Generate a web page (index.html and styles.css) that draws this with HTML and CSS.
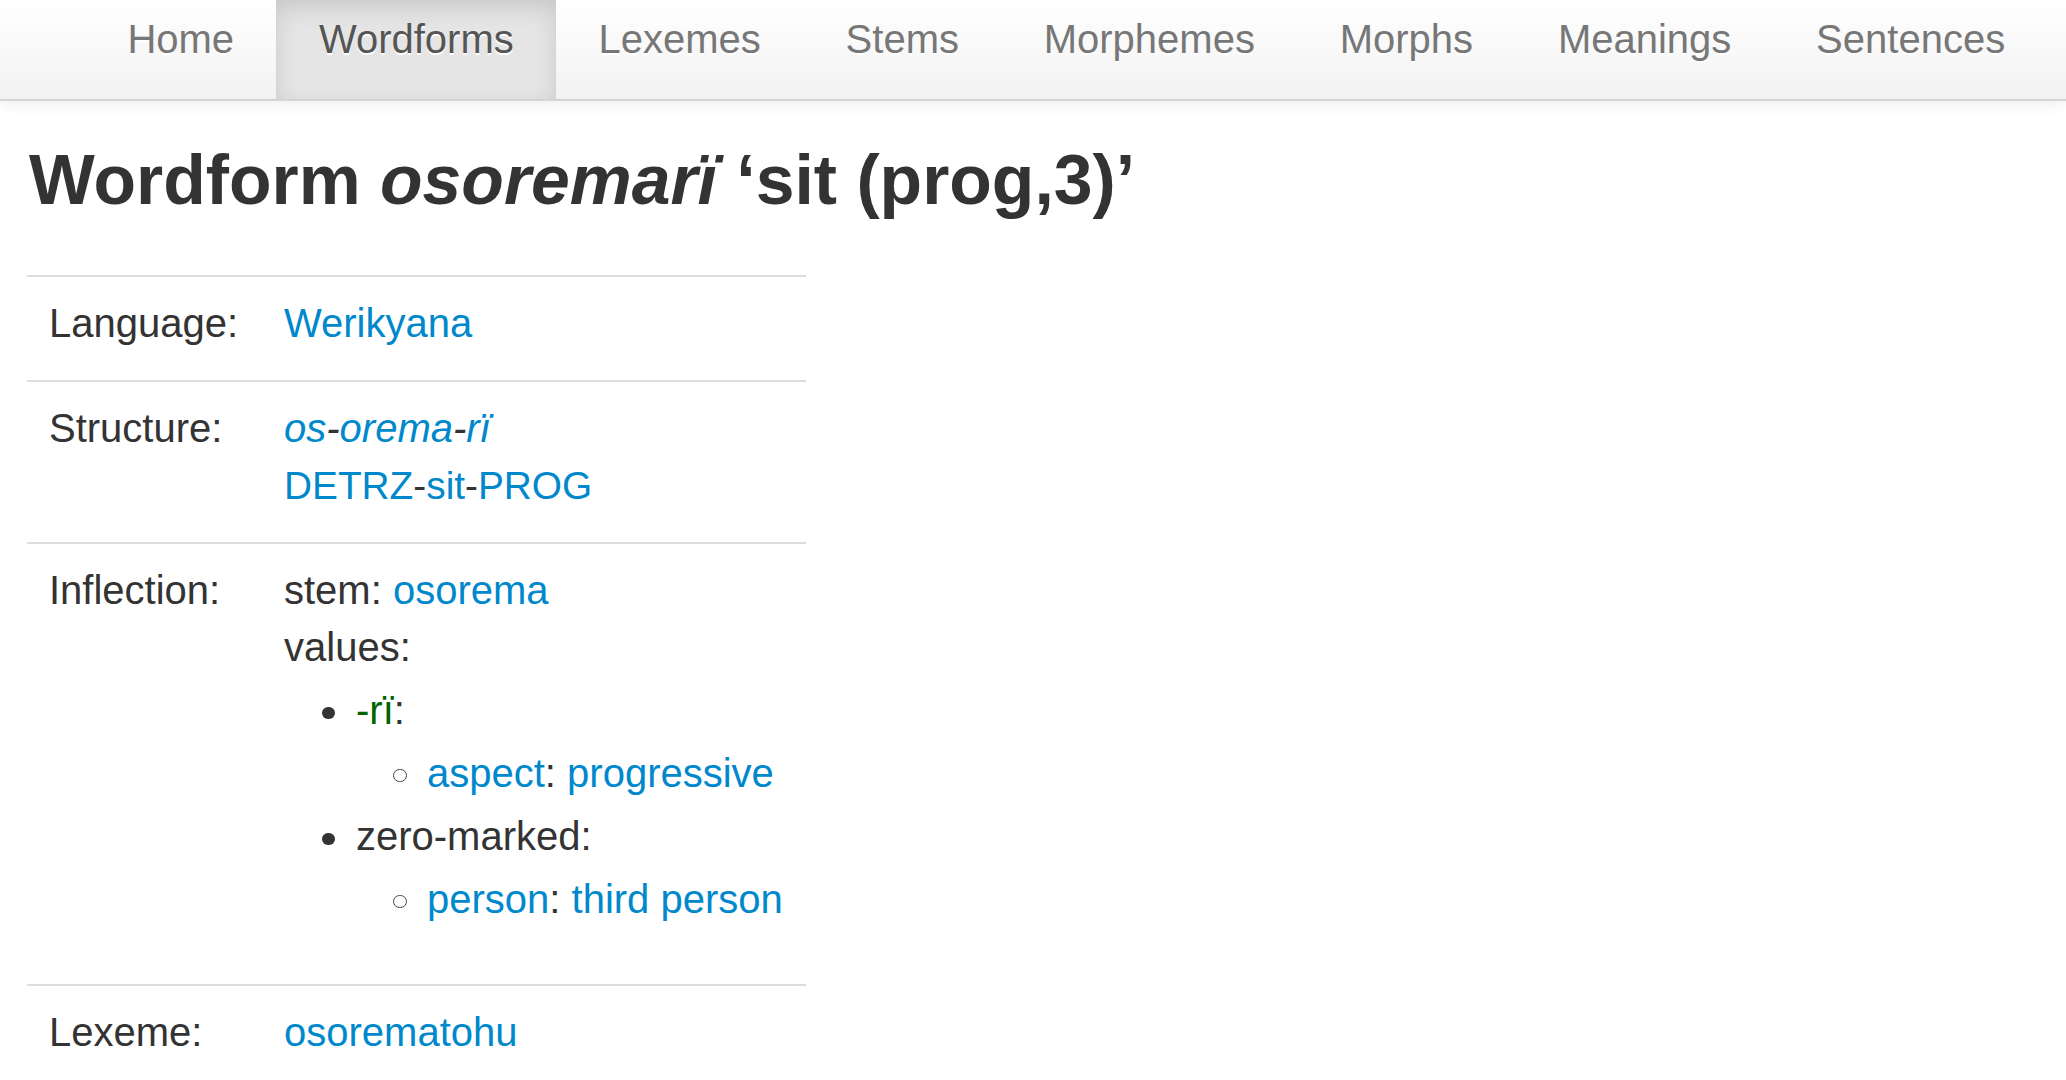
FILE: index.html
```html
<!DOCTYPE html>
<html lang="en">
<head>
<meta charset="utf-8">
<title>Wordform osoremarï</title>
<link rel="stylesheet" href="styles.css">
</head>
<body>
<header class="navbar">
  <ul class="nav">
    <li><a href="#">Home</a></li>
    <li class="active"><a href="#">Wordforms</a></li>
    <li><a href="#">Lexemes</a></li>
    <li><a href="#">Stems</a></li>
    <li><a href="#">Morphemes</a></li>
    <li><a href="#">Morphs</a></li>
    <li><a href="#">Meanings</a></li>
    <li><a href="#">Sentences</a></li>
  </ul>
</header>
<main class="page">
  <h1 class="title">Wordform <i>osoremarï</i> ‘sit (prog,3)’</h1>
  <table class="props">
    <colgroup><col class="col-label"><col class="col-value"></colgroup>
    <tbody>
      <tr>
        <th>Language:</th>
        <td><a href="#">Werikyana</a></td>
      </tr>
      <tr>
        <th>Structure:</th>
        <td>
          <div><i><a href="#">os</a>-<a href="#">orema</a>-<a href="#">rï</a></i></div>
          <div class="gloss"><a href="#">DETRZ</a>-<a href="#">sit</a>-<a href="#">PROG</a></div>
        </td>
      </tr>
      <tr>
        <th>Inflection:</th>
        <td>
          <div>stem: <a href="#">osorema</a></div>
          <div>values:</div>
          <ul class="values">
            <li><span class="morph">-rï</span>:
              <ul class="feats">
                <li><a href="#">aspect</a>: <a href="#">progressive</a></li>
              </ul>
            </li>
            <li>zero-marked:
              <ul class="feats">
                <li><a href="#">person</a>: <a href="#">third person</a></li>
              </ul>
            </li>
          </ul>
        </td>
      </tr>
      <tr>
        <th>Lexeme:</th>
        <td><a href="#">osorematohu</a></td>
      </tr>
    </tbody>
  </table>
</main>
</body>
</html>
```
FILE: styles.css
```css
html, body {
  margin: 0;
  padding: 0;
}

body {
  font-family: "Liberation Sans", Arial, Helvetica, sans-serif;
  font-size: 40px;
  line-height: 57px;
  color: #333;
  background: #fff;
}

a {
  color: #0088cc;
  text-decoration: none;
}

/* Navbar */
.navbar {
  height: 99px;
  border-bottom: 2px solid #d4d4d4;
  background: linear-gradient(#ffffff, #f2f2f2);
  box-shadow: 0 3px 14px rgba(0, 0, 0, 0.07);
}

.nav {
  display: flex;
  margin: 0;
  padding: 0 0 0 85px;
  list-style: none;
  height: 99px;
}

.nav li {
  height: 99px;
}

.nav a {
  display: block;
  height: 57px;
  padding: 11px 42.4px 31px;
  line-height: 57px;
  color: #777;
  text-shadow: 0 2px 0 #fff;
}

.nav .active a {
  color: #555;
  background: #e5e5e5;
  box-shadow: inset 0 8px 22px rgba(0, 0, 0, 0.125);
}

/* Page */
.page {
  padding: 0 27px;
}

.title {
  margin: 38.75px 0 55px 2px;
  font-size: 69.7px;
  line-height: 80px;
  font-weight: bold;
  color: #333;
}

.props {
  border-collapse: collapse;
  table-layout: fixed;
  width: 779px;
}

.col-label {
  width: 236px;
}

.props th,
.props td {
  border-top: 2px solid #ddd;
  padding: 18px 23px 28px 22px;
  text-align: left;
  vertical-align: top;
  font-weight: normal;
}

.props td {
  padding-left: 21px;
}

.gloss {
  font-size: 38.8px;
}

.values {
  margin: 3px 0 25px;
  padding: 0 0 0 72px;
  list-style: none;
}

.values li {
  line-height: 63px;
}

.values > li::before {
  content: "";
  display: inline-block;
  width: 12.6px;
  height: 12.6px;
  margin: 0 21.4px 0 -34px;
  border-radius: 50%;
  background: #333;
  vertical-align: 4.3px;
}

.feats {
  margin: 0;
  padding: 0 0 0 71px;
  list-style: none;
}

.feats > li::before {
  content: "";
  display: inline-block;
  box-sizing: border-box;
  width: 13.4px;
  height: 13.4px;
  margin: 0 20.3px 0 -33.7px;
  border: 1.6px solid #444;
  border-radius: 50%;
  background: transparent;
  vertical-align: 4.8px;
}

.morph {
  color: #006400;
}
```
